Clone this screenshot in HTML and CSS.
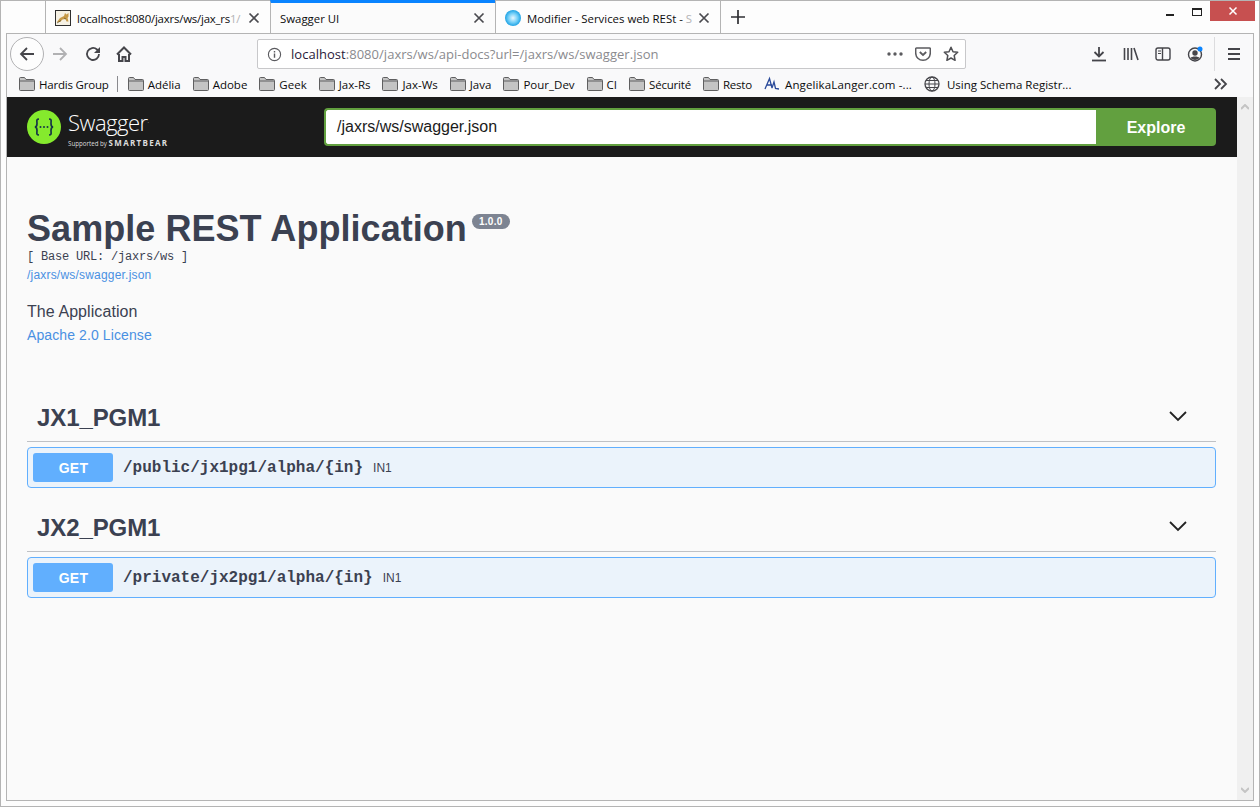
FILE: index.html
```html
<!DOCTYPE html>
<html lang="en">
<head>
<meta charset="utf-8">
<title>Swagger UI</title>
<link rel="stylesheet" href="styles.css">
</head>
<body>
<svg class="defs" width="0" height="0">
  <symbol id="folder" viewBox="0 0 16 16">
    <path d="M.5 13.500v-11a1 1 0 0 1 1-1h4l1.500 2h7.500a1 1 0 0 1 1 1v9a1 1 0 0 1-1 1h-13a1 1 0 0 1-1-1z" fill="#c4c4c4" stroke="#5f5f60"/>
    <path d="M1 5h14" stroke="#5f5f60"/>
  </symbol>
  <symbol id="close" viewBox="0 0 12 12">
    <path d="M1.500 1.500l9 9M10.500 1.500l-9 9" stroke="#4a4a4f" stroke-width="1.700" fill="none"/>
  </symbol>
</svg>
<div class="window">
  <div class="titlebar">
    <div class="tab">
      <svg class="favicon" viewBox="0 0 16 16"><rect x=".5" y=".5" width="15" height="15" fill="#f6f1e4" stroke="#2e2e2e"/><path d="M2 12l3-4 4-2 1-3 1.500 1.500L13.500 3v3.500l-1 1.500 1 3.500h-2l-1-2.500-3 .5-2.500 2.500z" fill="#c79a48"/><path d="M2 13l4-2.500M9 8l2 1" stroke="#6b5a2d" stroke-width=".8"/></svg>
      <span class="tab-title tab-title-tight">localhost:8080/jaxrs/ws/jax_rs<span class="fade">1/</span></span>
      <svg class="tab-close"><use href="#close"/></svg>
    </div>
    <div class="tab tab-active">
      <span class="tab-title tab-title-plain">Swagger UI</span>
      <svg class="tab-close"><use href="#close"/></svg>
    </div>
    <div class="tab tab-last">
      <svg class="favicon" viewBox="0 0 16 16"><defs><radialGradient id="orb"><stop offset="0" stop-color="#e6f7ff"/><stop offset=".6" stop-color="#6fcdf7"/><stop offset="1" stop-color="#1ea2e4"/></radialGradient></defs><circle cx="8" cy="8" r="8" fill="url(#orb)"/></svg>
      <span class="tab-title">Modifier - Services web RESt - <span class="fade">S</span></span>
      <svg class="tab-close"><use href="#close"/></svg>
    </div>
    <svg class="newtab" viewBox="0 0 14 14"><path d="M7 0v14M0 7h14" stroke="#2f2f33" stroke-width="1.700"/></svg>
    <div class="winctl">
      <svg class="win-min" viewBox="0 0 8 3"><rect width="8" height="2" y="1" fill="#222"/></svg>
      <svg class="win-max" viewBox="0 0 10 8"><rect x=".5" y=".5" width="9" height="7" fill="none" stroke="#222"/><rect width="10" height="2" fill="#222"/></svg>
      <div class="win-close"><svg class="win-x" viewBox="0 0 10 10"><path d="M1.500 1.500l7 7M8.500 1.500l-7 7" stroke="#fff" stroke-width="1.500"/></svg></div>
    </div>
  </div>
  <div class="frame">
    <div class="toolbar">
      <button class="backbtn"><svg viewBox="0 0 16 16" class="ico"><path d="M15 8H2M8 2L2 8l6 6" fill="none" stroke="#45454a" stroke-width="1.800"/></svg></button>
      <svg viewBox="0 0 16 16" class="ico fwd"><path d="M1 8h13M8 2l6 6-6 6" fill="none" stroke="#b1b1b3" stroke-width="1.800"/></svg>
      <svg viewBox="0 0 16 16" class="ico reload"><path d="M14 8a6 6 0 1 1-2-4.500L14 5.500" fill="none" stroke="#45454a" stroke-width="1.800"/><path d="M15 1v6H9z" fill="#45454a"/></svg>
      <svg viewBox="0 0 16 16" class="ico home"><path d="M1 8.500l7-7 7 7" fill="none" stroke="#45454a" stroke-width="2"/><path d="M3 8v7h3.500v-4h3v4H13V8" fill="none" stroke="#45454a" stroke-width="2"/></svg>
      <div class="urlbar">
        <svg viewBox="0 0 16 16" class="info"><circle cx="8" cy="8" r="6.500" fill="none" stroke="#5b5b5f" stroke-width="1.200"/><path d="M8 7v4.500M8 4.300v1.500" stroke="#5b5b5f" stroke-width="1.500"/></svg>
        <span class="url"><span class="url-host">localhost</span>:8080/jaxrs/ws/api-docs?url=/jaxrs/ws/swagger.json</span>
        <svg viewBox="0 0 16 4" class="dots"><circle cx="2" cy="2" r="1.700" fill="#5b5b5f"/><circle cx="8" cy="2" r="1.700" fill="#5b5b5f"/><circle cx="14" cy="2" r="1.700" fill="#5b5b5f"/></svg>
        <svg viewBox="0 0 16 16" class="ico pocket"><path d="M1.500 2h13a.8.8 0 0 1 .8.800V7A7.300 7.300 0 0 1 .7 7V2.800A.8.8 0 0 1 1.500 2z" fill="none" stroke="#5b5b5f" stroke-width="1.500"/><path d="M4.800 6L8 9l3.200-3" fill="none" stroke="#5b5b5f" stroke-width="1.800"/></svg>
        <svg viewBox="0 0 16 16" class="ico star"><path d="M8 1.300l2 4.400 4.700.6-3.500 3.200.9 4.800L8 12l-4.100 2.300.9-4.800L1.300 6.300 6 5.700z" fill="none" stroke="#4f4f53" stroke-width="1.500" stroke-linejoin="round"/></svg>
      </div>
      <div class="tools">
        <svg viewBox="0 0 16 16" class="ico"><path d="M8 1v9M3.500 6L8 10.500 12.500 6" fill="none" stroke="#45454a" stroke-width="1.800"/><path d="M1 14.500h14" stroke="#45454a" stroke-width="1.800"/></svg>
        <svg viewBox="0 0 16 16" class="ico"><path d="M1.500 2v12M5 2v12M8.500 2v12M11 2l4 12" fill="none" stroke="#45454a" stroke-width="1.600"/></svg>
        <svg viewBox="0 0 16 16" class="ico"><rect x="1" y="2" width="14" height="12" rx="2" fill="none" stroke="#45454a" stroke-width="1.400"/><path d="M7.500 2v12" stroke="#45454a" stroke-width="1.400"/><path d="M3 5h3M3 7.500h3" stroke="#45454a"/></svg>
        <svg viewBox="0 0 16 16" class="ico"><circle cx="8" cy="8.500" r="6.500" fill="none" stroke="#45454a" stroke-width="1.400"/><circle cx="8" cy="7" r="2.700" fill="#45454a"/><path d="M3.500 12c1-2 8-2 9 0a6 6 0 0 1-9 0z" fill="#45454a"/><circle cx="13" cy="3" r="2.500" fill="#0a84ff"/></svg>
        <span class="tool-sep"></span>
        <svg viewBox="0 0 16 16" class="ico"><path d="M2 3h12M2 8h12M2 13h12" stroke="#45454a" stroke-width="1.800"/></svg>
      </div>
    </div>
    <div class="bookmarks">
      <span class="bm bm-tight"><svg class="bm-ico"><use href="#folder"/></svg>Hardis Group</span>
      <span class="bm-sep"></span>
      <span class="bm"><svg class="bm-ico"><use href="#folder"/></svg>Adélia</span>
      <span class="bm"><svg class="bm-ico"><use href="#folder"/></svg>Adobe</span>
      <span class="bm"><svg class="bm-ico"><use href="#folder"/></svg>Geek</span>
      <span class="bm"><svg class="bm-ico"><use href="#folder"/></svg>Jax-Rs</span>
      <span class="bm"><svg class="bm-ico"><use href="#folder"/></svg>Jax-Ws</span>
      <span class="bm"><svg class="bm-ico"><use href="#folder"/></svg>Java</span>
      <span class="bm"><svg class="bm-ico"><use href="#folder"/></svg>Pour_Dev</span>
      <span class="bm"><svg class="bm-ico"><use href="#folder"/></svg>CI</span>
      <span class="bm bm-tight"><svg class="bm-ico"><use href="#folder"/></svg>Sécurité</span>
      <span class="bm bm-tight"><svg class="bm-ico"><use href="#folder"/></svg>Resto</span>
      <span class="bm bm-wide"><svg class="bm-ico" viewBox="0 0 16 16"><path d="M1 13L5.500 2.500 8 12M3 9h5M8 12l2-6 1.500 6.500L15 13" fill="none" stroke="#2a4a9a" stroke-width="1.300"/></svg>AngelikaLanger.com -...</span>
      <span class="bm bm-globe"><svg class="bm-ico" viewBox="0 0 16 16"><circle cx="8" cy="8" r="7" fill="none" stroke="#45454a" stroke-width="1.300"/><ellipse cx="8" cy="8" rx="3" ry="7" fill="none" stroke="#45454a"/><path d="M1 8h14M2 4.500h12M2 11.500h12" stroke="#45454a"/></svg>Using Schema Registr...</span>
      <svg viewBox="0 0 14 12" class="bm-more"><path d="M1 1l5 5-5 5M7 1l5 5-5 5" fill="none" stroke="#45454a" stroke-width="1.800"/></svg>
    </div>
    <div class="viewport">
      <main class="page">
        <header class="topbar">
          <div class="logo">
            <svg viewBox="0 0 34 34" class="logo-mark"><circle cx="17" cy="17" r="17" fill="#85ea2d"/><path d="M12 9c-3 0-2 2-2 4.500S9 17 7.800 17c1.200 0 2.200 1 2.200 3.500S9 25 12 25M22 9c3 0 2 2 2 4.500s1 3.500 2.200 3.500c-1.200 0-2.200 1-2.200 3.500S25 25 22 25" fill="none" stroke="#173647" stroke-width="1.700"/><circle cx="13.500" cy="17" r="1" fill="#173647"/><circle cx="17" cy="17" r="1" fill="#173647"/><circle cx="20.500" cy="17" r="1" fill="#173647"/></svg>
            <div class="logo-text">
              <span class="logo-name">Swagger<sup class="logo-tm">.</sup></span>
              <span class="logo-sub">Supported by <b class="logo-bear">SMARTBEAR</b></span>
            </div>
          </div>
          <form class="explore">
            <span class="explore-input">/jaxrs/ws/swagger.json</span>
            <span class="explore-btn">Explore</span>
          </form>
        </header>
        <section class="info-block">
          <h2 class="title">Sample REST Application<span class="version">1.0.0</span></h2>
          <p class="base-url">[ Base URL: /jaxrs/ws ]</p>
          <a class="spec-link">/jaxrs/ws/swagger.json</a>
          <p class="desc">The Application</p>
          <a class="license">Apache 2.0 License</a>
        </section>
        <section class="tag">
          <h4 class="tag-head">JX1_PGM1<svg viewBox="0 0 20 20" class="chev"><path d="M2 6l8 8 8-8" fill="none" stroke="#222" stroke-width="1.800"/></svg></h4>
          <div class="op"><span class="op-method">GET</span><span class="op-path">/public/jx1pg1/alpha/{in}</span><span class="op-desc">IN1</span></div>
        </section>
        <section class="tag">
          <h4 class="tag-head">JX2_PGM1<svg viewBox="0 0 20 20" class="chev"><path d="M2 6l8 8 8-8" fill="none" stroke="#222" stroke-width="1.800"/></svg></h4>
          <div class="op"><span class="op-method">GET</span><span class="op-path">/private/jx2pg1/alpha/{in}</span><span class="op-desc">IN1</span></div>
        </section>
      </main>
      <div class="scrollbar">
        <svg viewBox="0 0 8 6" class="sb-arrow"><path d="M0 5l4-4 4 4" fill="none" stroke="#c4c4c4" stroke-width="2"/></svg>
        <svg viewBox="0 0 8 6" class="sb-arrow"><path d="M0 1l4 4 4-4" fill="none" stroke="#c4c4c4" stroke-width="2"/></svg>
      </div>
    </div>
  </div>
</div>
</body>
</html>
```
FILE: styles.css
```css
* { box-sizing: border-box; }
html, body { margin: 0; padding: 0; }
body { width: 1260px; height: 807px; overflow: hidden; font-family: "Liberation Sans", Arial, sans-serif; }
.defs { display: block; height: 0; }
.window { width: 1260px; height: 807px; background: #fdfdfd; border: 1px solid #b4b4b4; display: flex; flex-direction: column; padding: 0 5px 5px 5px; }
.titlebar { height: 32px; display: flex; align-items: stretch; padding-left: 39px; font-family: "Open Sans", "Noto Sans", sans-serif; font-size: 11.400px; color: #0c0c0d; }
.tab { width: 225px; display: flex; align-items: center; padding: 2px 10px 0 9px; border-left: 1px solid #b4b4b4; gap: 6px; }
.tab-active { border-top: 3px solid #0a84ff; background: #fbfbfb; padding-top: 0; margin-top: -1px; }
.tab-last { border-right: 1px solid #b4b4b4; width: 226px; }
.tab-title { flex: 1; min-width: 0; white-space: nowrap; }
.tab-title-tight { letter-spacing: -.2px; }
.fade { color: #b4b4b6; }
.favicon { width: 16px; height: 16px; flex: none; }
.tab-close { width: 12px; height: 12px; flex: none; }
.newtab { width: 14px; height: 14px; align-self: center; margin-left: 10px; }
.winctl { margin-left: auto; margin-right: -1px; display: flex; align-items: flex-start; }
.win-min { width: 8px; height: 3px; margin: 12px 18px 0 0; }
.win-max { width: 10px; height: 8px; margin: 7px 8px 0 0; }
.win-close { width: 45px; height: 20px; background: #c75050; display: flex; align-items: center; justify-content: center; }
.win-x { width: 10px; height: 10px; }
.frame { flex: 1; min-height: 0; border: 1px solid #b4b4b4; display: flex; flex-direction: column; background: #f9f9fa; }
.toolbar { height: 36px; display: flex; align-items: center; padding: 4px 0 0 3px; flex: none; }
.ico { width: 16px; height: 16px; flex: none; }
.backbtn { width: 34px; height: 34px; border-radius: 50%; border: 1px solid #b1b1b3; background: #fdfdfd; display: flex; align-items: center; justify-content: center; padding: 0; flex: none; }
.fwd { margin-left: 8px; }
.reload { margin-left: 17px; }
.home { margin-left: 15px; }
.urlbar { width: 709px; height: 30px; margin: 0 0 0 125px; background: #fff; border: 1px solid #c8c8ca; border-radius: 2px; display: flex; align-items: center; padding: 0 6px 0 9px; font-family: "Open Sans", "Noto Sans", sans-serif; font-size: 13px; letter-spacing: .03px; color: #8a8a8e; flex: none; }
.info { width: 15px; height: 15px; flex: none; margin-right: 9px; }
.url { flex: 1; white-space: nowrap; }
.url-host { color: #2a1a3a; }
.dots { width: 16px; height: 4px; flex: none; }
.pocket { margin-left: 12px; }
.star { margin-left: 12px; }
.tools { flex: 1; display: flex; align-items: center; gap: 16px; padding-left: 125px; }
.tool-sep { width: 1px; height: 34px; background: #dcdcde; margin: 0 -5px; }
.bookmarks { height: 27px; display: flex; align-items: center; padding: 2px 0 1px 12px; gap: 12px; font-family: "Open Sans", "Noto Sans", sans-serif; font-size: 11.500px; color: #0c0c0d; flex: none; white-space: nowrap; }
.bm { display: flex; align-items: center; gap: 4px; }
.bm-tight { letter-spacing: -.2px; }
.bm-wide { gap: 5px; letter-spacing: .13px; }
.bm-ico { width: 16px; height: 16px; flex: none; }
.bm-globe { gap: 7px; }
.bm-sep { width: 1px; height: 16px; background: #8a8a8e; margin: 0 -2px 0 -4px; }
.bm-more { width: 14px; height: 12px; margin-left: auto; margin-right: 25px; }
.viewport { flex: 1; min-height: 0; display: flex; }
.page { flex: 1; min-width: 0; background: #fafafa; }
.topbar { height: 60px; background: #1b1b1b; padding: 0 21px 0 20px; display: flex; align-items: center; }
.logo { display: flex; align-items: center; gap: 7px; width: 297px; flex: none; color: #fff; }
.logo-mark { width: 34px; height: 34px; flex: none; }
.logo-text { display: flex; flex-direction: column; gap: 3px; font-family: "Open Sans", sans-serif; margin-top: 3px; }
.logo-name { font-size: 22px; line-height: 26px; font-weight: 300; letter-spacing: -.5px; }
.logo-tm { font-size: 6px; line-height: 0; }
.logo-sub { font-size: 6.200px; line-height: 9px; color: #ddd; white-space: nowrap; }
.logo-bear { font-size: 8px; letter-spacing: 1.300px; font-weight: 700; }
.explore { flex: 1; display: flex; height: 38px; }
.explore-input { flex: 1; background: #fff; border: 2px solid #62a03f; border-right: 0; border-radius: 4px 0 0 4px; font-size: 16px; color: #1b1b1b; display: flex; align-items: center; padding-left: 11px; }
.explore-btn { width: 120px; padding-top: 1px; background: #62a03f; border-radius: 0 4px 4px 0; color: #fff; font-size: 16px; font-weight: 700; display: flex; align-items: center; justify-content: center; }
.info-block { padding: 51px 20px 0; margin: 0; color: #3b4151; }
.title { margin: 0; font-size: 36px; line-height: 42px; font-weight: 700; letter-spacing: .05px; color: #3b4151; }
.version { display: inline-block; vertical-align: top; margin: 6px 0 0 5px; height: 15px; padding: 0 7px; border-radius: 8px; background: #7d8492; color: #fff; font-size: 10px; line-height: 15px; letter-spacing: .3px; }
.base-url { margin: 0; font-family: "Liberation Mono", monospace; font-size: 12px; line-height: 14px; letter-spacing: -.2px; color: #3b4151; }
.spec-link { display: block; margin-top: 2px; font-size: 12px; line-height: 18px; letter-spacing: .2px; color: #4990e2; }
.desc { margin: 18px 0 0; font-size: 16px; line-height: 20px; letter-spacing: .07px; }
.license { display: block; margin-top: 4px; font-size: 14px; line-height: 18px; letter-spacing: .1px; color: #4990e2; }
.tag { width: 1189px; margin-left: 20px; }
.tag + .tag { margin-top: 18px; }
.info-block + .tag { margin-top: 52px; }
.tag-head { margin: 0 0 5px; height: 46px; display: flex; align-items: center; justify-content: space-between; padding: 0 28px 2px 10px; font-size: 24px; font-weight: 700; letter-spacing: -.1px; color: #3b4151; border-bottom: 1px solid #bfc1c5; }
.chev { width: 20px; height: 20px; margin-bottom: 4px; }
.op { height: 41px; border: 1px solid #61affe; border-radius: 4px; background: #ebf3fb; display: flex; align-items: center; padding: 0 5px; color: #3b4151; }
.op-method { width: 80px; height: 29px; padding: 1px 0 0 1px; background: #61affe; border-radius: 3px; color: #fff; font-size: 14px; font-weight: 700; letter-spacing: .3px; display: flex; align-items: center; justify-content: center; }
.op-path { margin-left: 10px; font-family: "Liberation Mono", monospace; font-size: 16px; font-weight: 700; }
.op-desc { margin-left: 10px; font-size: 12px; color: #3b4151; }
.scrollbar { width: 16px; flex: none; background: #f0f0f0; display: flex; flex-direction: column; justify-content: space-between; align-items: center; padding: 7px 0; }
.sb-arrow { width: 8px; height: 6px; }
```
